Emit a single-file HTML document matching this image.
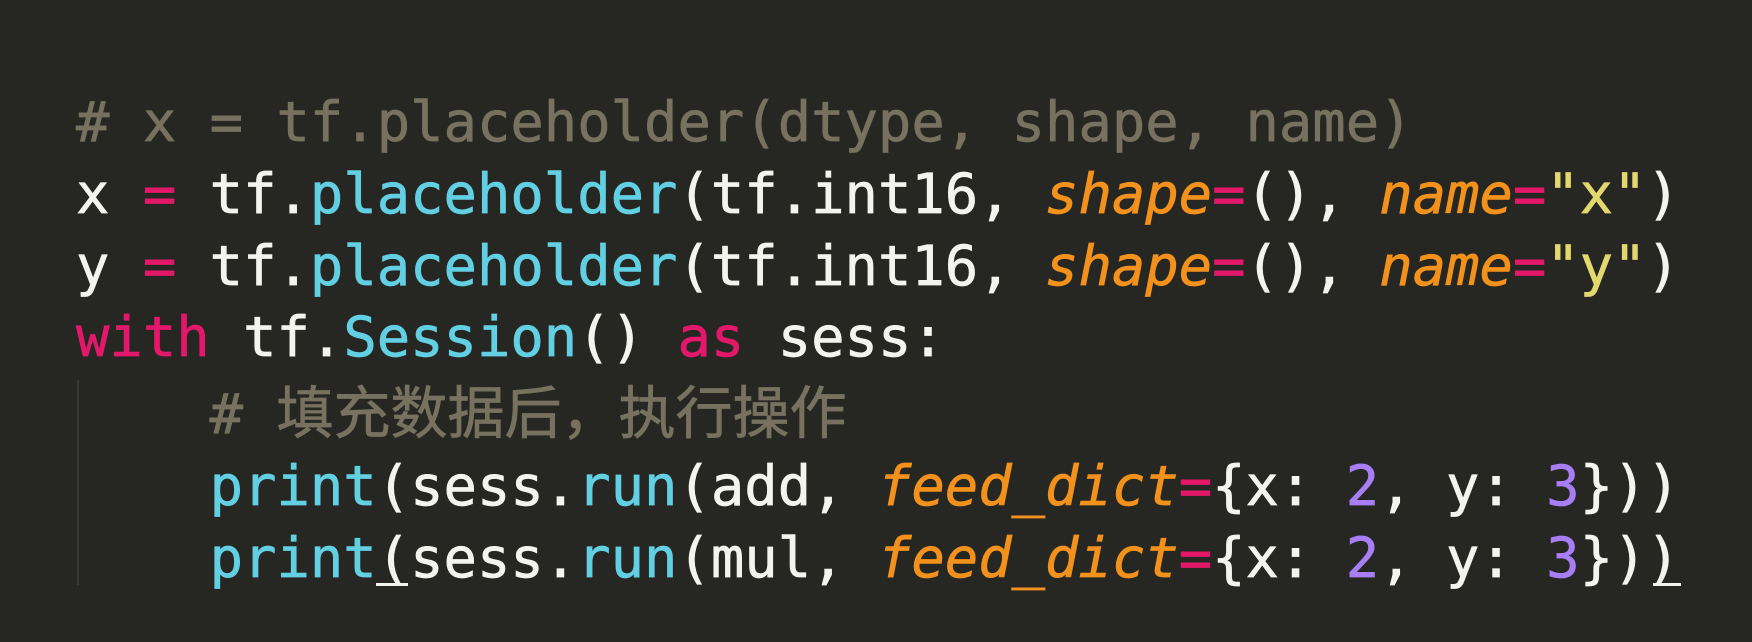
<!DOCTYPE html>
<html><head><meta charset="utf-8"><style>
html,body{margin:0;padding:0;background:#262622;width:1752px;height:642px;overflow:hidden}
pre{position:absolute;left:76px;top:87px;margin:0;font-family:"DejaVu Sans Mono","Liberation Mono","Noto Sans CJK SC",monospace;font-size:55.5px;line-height:71.8px;color:#f4f4ee;-webkit-text-stroke:0.7px currentColor}
.c{color:#76725f}.k{color:#e4186a}.f{color:#62cfe3}.a{color:#f2921c;font-style:italic}.s{color:#e2d86e}.n{color:#a87ef5}
.g{position:absolute;left:77px;top:380px;width:2px;height:205px;background:#3a3a34}
.cj{font-family:"Noto Sans CJK SC",sans-serif;font-size:57px}
.u{position:absolute;height:3px;background:#f4f4ee;top:583px}
</style></head><body>
<div class="g"></div>
<div class="u" style="left:376px;width:32px"></div>
<div class="u" style="left:1653px;width:28px"></div>
<pre><span class="c"># x = tf.placeholder(dtype, shape, name)</span>
x <span class="k">=</span> tf.<span class="f">placeholder</span>(tf.int16, <span class="a">shape</span><span class="k">=</span>(), <span class="a">name</span><span class="k">=</span><span class="s">"x"</span>)
y <span class="k">=</span> tf.<span class="f">placeholder</span>(tf.int16, <span class="a">shape</span><span class="k">=</span>(), <span class="a">name</span><span class="k">=</span><span class="s">"y"</span>)
<span class="k">with</span> tf.<span class="f">Session</span>() <span class="k">as</span> sess:
    <span class="c"># <span class="cj">填充数据后，执行操作</span></span>
    <span class="f">print</span>(sess.<span class="f">run</span>(add, <span class="a">feed_dict</span><span class="k">=</span>{x: <span class="n">2</span>, y: <span class="n">3</span>}))
    <span class="f">print</span>(sess.<span class="f">run</span>(mul, <span class="a">feed_dict</span><span class="k">=</span>{x: <span class="n">2</span>, y: <span class="n">3</span>}))</pre>
</body></html>
